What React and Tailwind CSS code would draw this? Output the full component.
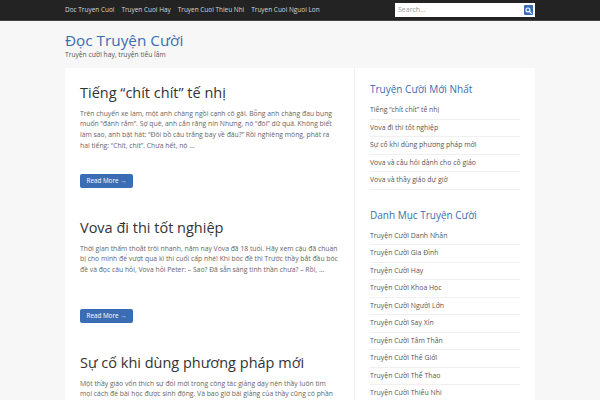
import React from 'react';

const navItems = ["Doc Truyen Cuoi", "Truyen Cuoi Hay", "Truyen Cuoi Thieu Nhi", "Truyen Cuoi Nguoi Lon"];

const posts = [
  {
    title: "Tiếng “chít chít” tế nhị",
    excerpt: "Trên chuyến xe lam, một anh chàng ngồi cạnh cô gái. Bỗng anh chàng đau bụng muốn “đánh rắm”. Sợ quê, anh cắn răng nín Nhưng, nó “đòi” dữ quá. Không biết làm sao, anh bật hát: “Đôi bồ câu trắng bay về đâu?” Rồi nghiêng mông, phát ra hai tiếng: “Chít, chít”. Chưa hết, nó …",
  },
  {
    title: "Vova đi thi tốt nghiệp",
    excerpt: "Thời gian thấm thoắt trôi nhanh, năm nay Vova đã 18 tuổi. Hãy xem cậu đã chuẩn bị cho mình để vượt qua kì thi cuối cấp nhé! Khi bóc đề thi Trước thầy bắt đầu bóc đề và đọc câu hỏi, Vova hỏi Peter: – Sao? Đã sẵn sàng tinh thần chưa? – Rồi, …",
  },
  {
    title: "Sự cố khi dùng phương pháp mới",
    excerpt: "Một thầy giáo vốn thích sự đổi mới trong công tác giảng dạy nên thầy luôn tìm mọi cách để bài học được sinh động. Và bao giờ bài giảng của thầy cũng có phần hấp dẫn riêng, học sinh rất thích thú …",
  },
];

const recent = [
  "Tiếng “chít chít” tế nhị",
  "Vova đi thi tốt nghiệp",
  "Sự cố khi dùng phương pháp mới",
  "Vova và câu hỏi dành cho cô giáo",
  "Vova và thầy giáo dự giờ",
];

const categories = [
  "Truyện Cười Danh Nhân",
  "Truyện Cười Gia Đình",
  "Truyện Cười Hay",
  "Truyện Cười Khoa Học",
  "Truyện Cười Người Lớn",
  "Truyện Cười Say Xỉn",
  "Truyện Cười Tâm Thần",
  "Truyện Cười Thế Giới",
  "Truyện Cười Thể Thao",
  "Truyện Cười Thiếu Nhi",
];

const SearchIcon = () => (
  <svg width="7" height="7" viewBox="0 0 10 10" fill="none" stroke="white" strokeWidth="1.6">
    <circle cx="4.2" cy="4.2" r="2.8" />
    <path d="M6.3 6.3 L9 9" strokeLinecap="round" />
  </svg>
);

const Widget = ({ title, items, className }) => (
  <div className={className}>
    <h3 className="text-[10px] leading-[12px] text-[#3b6cb2] mb-[7px]">{title}</h3>
    <ul>
      {items.map((item) => (
        <li key={item} className="h-[17.5px] flex items-center border-b border-[#f0f0f0] text-[6.9px] text-[#555]">
          {item}
        </li>
      ))}
    </ul>
  </div>
);

export default function App() {
  return (
    <div className="w-[600px] h-[400px] overflow-hidden bg-[#f7f7f7]" style={{ fontFamily: '"Open Sans", "Noto Sans", sans-serif' }}>
      {/* Top bar */}
      <div className="h-[21px] bg-[#232323] border-b border-[#444]">
        <div className="w-[470px] mx-auto h-full flex items-center">
          <nav className="flex gap-[7px] text-[6.45px] text-[#d8d8d8]">
            {navItems.map((n) => (
              <span key={n}>{n}</span>
            ))}
          </nav>
          <div className="ml-auto w-[140px] h-[14px] bg-white flex items-center pl-[3px] pr-[2px]">
            <span className="text-[7px] text-[#999]">Search...</span>
            <span className="ml-auto w-[9px] h-[10px] bg-[#3b6cb2] flex items-center justify-center rounded-[1px]">
              <SearchIcon />
            </span>
          </div>
        </div>
      </div>

      {/* Header */}
      <div className="w-[470px] mx-auto pt-[9px] h-[47px]">
        <h1 className="text-[15.3px] leading-[20px] text-[#3b6cb2]">Đọc Truyện Cười</h1>
        <p className="text-[6.7px] leading-[9px] text-[#555]">Truyện cười hay, truyện tiếu lâm</p>
      </div>

      {/* Content */}
      <div className="w-[470px] mx-auto flex bg-white min-h-[340px]">
        <main className="w-[290px] border-r border-[#eee] pl-[15px] pr-[16px] pt-[17px]">
          {posts.map((p) => (
            <article key={p.title} className="mb-[32.5px]">
              <h2 className="text-[14.5px] leading-[16px] text-[#333] mb-[7.5px]">{p.title}</h2>
              <p className="text-[6.8px] leading-[10.7px] text-[#666] min-h-[43px]">{p.excerpt}</p>
              <button className="mt-[22px] w-[53px] h-[14px] bg-[#3b6db4] rounded-[2px] text-white text-[6.3px] flex items-center justify-center">
                Read More →
              </button>
            </article>
          ))}
        </main>
        <aside className="w-[180px] pl-[15px] pr-[15px] pt-[15px]">
          <Widget title="Truyện Cười Mới Nhất" items={recent} />
          <Widget title="Danh Mục Truyện Cười" items={categories} className="mt-[19px]" />
        </aside>
      </div>
    </div>
  );
}
